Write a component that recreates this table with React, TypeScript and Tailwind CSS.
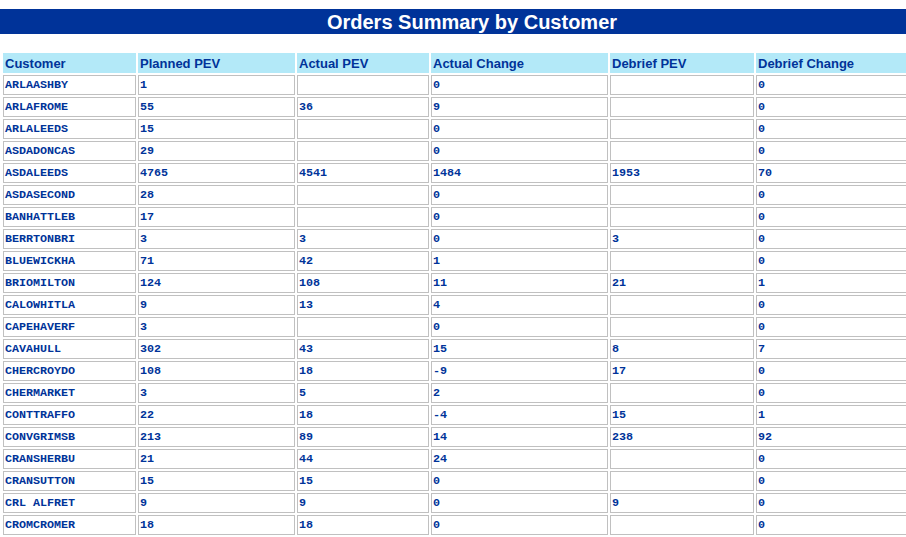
const rows: [string, string, string, string, string, string][] = [
  ["ARLAASHBY", "1", "", "0", "", "0"],
  ["ARLAFROME", "55", "36", "9", "", "0"],
  ["ARLALEEDS", "15", "", "0", "", "0"],
  ["ASDADONCAS", "29", "", "0", "", "0"],
  ["ASDALEEDS", "4765", "4541", "1484", "1953", "70"],
  ["ASDASECOND", "28", "", "0", "", "0"],
  ["BANHATTLEB", "17", "", "0", "", "0"],
  ["BERRTONBRI", "3", "3", "0", "3", "0"],
  ["BLUEWICKHA", "71", "42", "1", "", "0"],
  ["BRIOMILTON", "124", "108", "11", "21", "1"],
  ["CALOWHITLA", "9", "13", "4", "", "0"],
  ["CAPEHAVERF", "3", "", "0", "", "0"],
  ["CAVAHULL", "302", "43", "15", "8", "7"],
  ["CHERCROYDO", "108", "18", "-9", "17", "0"],
  ["CHERMARKET", "3", "5", "2", "", "0"],
  ["CONTTRAFFO", "22", "18", "-4", "15", "1"],
  ["CONVGRIMSB", "213", "89", "14", "238", "92"],
  ["CRANSHERBU", "21", "44", "24", "", "0"],
  ["CRANSUTTON", "15", "15", "0", "", "0"],
  ["CRL ALFRET", "9", "9", "0", "9", "0"],
  ["CROMCROMER", "18", "18", "0", "", "0"],
  ["CROYDONDEP", "6", "", "0", "", "0"],
];

const headers = [
  { label: "Customer", w: "w-[133px]" },
  { label: "Planned PEV", w: "w-[157px]" },
  { label: "Actual PEV", w: "w-[132px]" },
  { label: "Actual Change", w: "w-[177px]" },
  { label: "Debrief PEV", w: "w-[144px]" },
  { label: "Debrief Change", w: "w-[184px]" },
];

export default function App() {
  return (
    <div className="h-[537px] w-[906px] overflow-hidden bg-white">
      <div className="w-[944px]">
        <div className="mt-[9px] flex h-[25px] items-center justify-center bg-[#003399]">
          <h1 className="font-['Liberation_Sans',Arial,sans-serif] text-[20px] font-bold leading-none text-white">
            Orders Summary by Customer
          </h1>
        </div>

        <div className="mt-[17px] px-px">
          <table className="table-fixed border-separate border-spacing-[2px]">
            <thead>
              <tr>
                {headers.map((h) => (
                  <th
                    key={h.label}
                    className={`${h.w} h-[20px] bg-[#b3e9f8] px-[2px] text-left align-middle font-['Liberation_Sans',Tahoma,sans-serif] text-[13px] font-bold leading-none text-[#003399]`}
                  >
                    {h.label}
                  </th>
                ))}
              </tr>
            </thead>
            <tbody>
              {rows.map((r) => (
                <tr key={r[0]}>
                  {r.map((c, i) => (
                    <td
                      key={i}
                      className="h-[20px] whitespace-pre border border-[#c0c0c0] px-px pt-px align-middle font-['Liberation_Mono','Courier_New',monospace] text-[11.7px] font-bold leading-none text-[#003399]"
                    >
                      {c}
                    </td>
                  ))}
                </tr>
              ))}
            </tbody>
          </table>
        </div>
      </div>
    </div>
  );
}
